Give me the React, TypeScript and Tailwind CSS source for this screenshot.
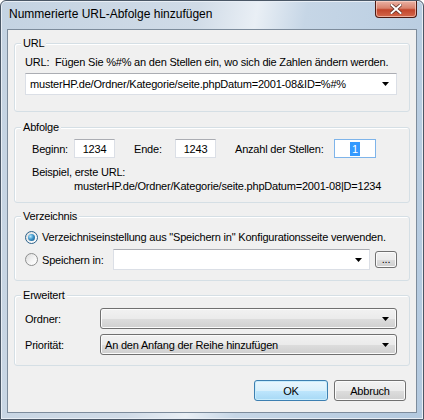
import React from "react";

const font = "font-['Liberation_Sans',Arial,sans-serif]";

function Arrow() {
  return (
    <svg width="7" height="4" viewBox="0 0 7 4" className="shrink-0">
      <path d="M0 0H7L3.5 4Z" fill="#000" />
    </svg>
  );
}

function Group({ title, className, children }: { title: string; className: string; children: React.ReactNode }) {
  return (
    <div className={`relative rounded-[3px] border border-[#d5dfe5] shadow-[inset_1px_1px_0_#ffffff] ${className}`}>
      <span className="absolute left-[6px] top-[-9px] bg-[#f0f0f0] px-[2px] leading-[16px] whitespace-nowrap">{title}</span>
      {children}
    </div>
  );
}

function TextCombo({ className, children }: { className: string; children?: React.ReactNode }) {
  return (
    <div
      className={`flex items-center border border-[#dbdfe6] border-t-[#abadb3] bg-white pl-[4px] pr-[7px] ${className}`}
    >
      <span className="flex-1 whitespace-nowrap leading-[16px]">{children}</span>
      <Arrow />
    </div>
  );
}

function ButtonCombo({ className, children }: { className: string; children?: React.ReactNode }) {
  return (
    <div
      className={`flex items-center rounded-[3px] border border-[#707070] bg-[linear-gradient(to_bottom,#f2f2f2_0%,#ebebeb_50%,#dddddd_51%,#cfcfcf_100%)] pl-[4px] pr-[7px] shadow-[inset_0_0_0_1px_#fbfbfb] ${className}`}
    >
      <span className="flex-1 whitespace-nowrap leading-[16px]">{children}</span>
      <Arrow />
    </div>
  );
}

function NumBox({ value, focused }: { value: string; focused?: boolean }) {
  return (
    <div
      className={`flex h-[19px] shrink-0 items-center justify-center border bg-white ${
        focused ? "border-[#7eb4ea] w-[42px]" : "border-[#dbdfe6] border-t-[#abadb3] w-[41px]"
      }`}
    >
      {focused ? (
        <span className="bg-[#3399ff] px-[2px] leading-[14px] text-white">{value}</span>
      ) : (
        <span className="leading-[16px]">{value}</span>
      )}
    </div>
  );
}

function Radio({ checked }: { checked?: boolean }) {
  return (
    <div
      className={`flex h-[13px] w-[13px] shrink-0 items-center justify-center rounded-full border ${
        checked ? "border-[#2c628b]" : "border-[#8e8f8f]"
      } bg-[linear-gradient(135deg,#dcdcdc_0%,#f6f6f6_60%,#ffffff_100%)]`}
    >
      {checked && (
        <div className="h-[7px] w-[7px] rounded-full bg-[radial-gradient(circle_at_35%_35%,#b4e8ff_0%,#3f95c9_45%,#0d4f80_100%)]" />
      )}
    </div>
  );
}

function Btn({ children, primary, className }: { children: React.ReactNode; primary?: boolean; className: string }) {
  return (
    <div
      className={`flex h-[21px] items-center justify-center rounded-[3px] border ${
        primary
          ? "border-[#3c7fb1] bg-[linear-gradient(to_bottom,#eaf6fd_0%,#d9f0fc_50%,#bee6fd_51%,#a7d9f5_100%)] shadow-[inset_0_0_0_1px_#c8ecfc]"
          : "border-[#707070] bg-[linear-gradient(to_bottom,#f2f2f2_0%,#ebebeb_50%,#dddddd_51%,#cfcfcf_100%)] shadow-[inset_0_0_0_1px_#fbfbfb]"
      } ${className}`}
    >
      <span className="leading-[16px]">{children}</span>
    </div>
  );
}

export default function App() {
  return (
    <div className={`${font} h-[420px] w-[424px] overflow-hidden bg-white text-[11px] tracking-[-0.2px] text-black`}>
      <div className="flex h-full w-full flex-col rounded-t-[6px] border border-[#4a5766] bg-[linear-gradient(100deg,#c4d3e2_0%,#d0dbe7_40%,#e9eff5_52%,#c6d6e6_62%,#b3c9df_100%)] shadow-[inset_0_0_0_1px_#e8eef5]">
        {/* title bar */}
        <div className="flex h-[28px] shrink-0 items-start">
          <span className="ml-[8px] mt-[5px] whitespace-nowrap text-[12px] leading-[16px] tracking-normal text-[#000]">Nummerierte URL-Abfolge hinzufügen</span>
          <div className="ml-auto mr-[6px] flex h-[17px] w-[42px] items-center justify-center rounded-b-[4px] border border-t-0 border-[#4d1a12] bg-[linear-gradient(to_bottom,#eab2a4_0%,#d9826d_45%,#c2452b_55%,#d3684c_100%)] shadow-[inset_0_0_0_1px_rgba(255,220,210,0.6)]">
            <svg width="12" height="10" viewBox="0 0 12 10">
              <path d="M1.5 1L10.5 9M10.5 1L1.5 9" stroke="#5a2a22" strokeWidth="3.4" strokeLinecap="square" />
              <path d="M1.5 1L10.5 9M10.5 1L1.5 9" stroke="#ffffff" strokeWidth="2" strokeLinecap="square" />
            </svg>
          </div>
        </div>

        {/* client area */}
        <div className="mx-[6px] mb-[6px] flex flex-1 flex-col border border-[#7d8c9c] bg-[#f0f0f0] px-[6px]">
          <Group title="URL" className="mt-[13px] h-[69px]">
            <div className="pl-[10px] pt-[10px]">
              <div className="whitespace-nowrap leading-[16px]">URL:&nbsp; Fügen Sie %#% an den Stellen ein, wo sich die Zahlen ändern werden.</div>
              <TextCombo className="mt-[3px] h-[22px] w-[372px]">musterHP.de/Ordner/Kategorie/seite.phpDatum=2001-08&amp;ID=%#%</TextCombo>
            </div>
          </Group>

          <Group title="Abfolge" className="mt-[15px] h-[76px]">
            <div className="pl-[17px] pt-[11px]">
              <div className="flex items-center whitespace-nowrap">
                <span className="w-[42px] shrink-0 leading-[16px]">Beginn:</span>
                <NumBox value="1234" />
                <span className="ml-[19px] w-[41px] shrink-0 leading-[16px]">Ende:</span>
                <NumBox value="1243" />
                <span className="ml-[19px] w-[99px] shrink-0 leading-[16px]">Anzahl der Stellen:</span>
                <NumBox value="1" focused />
              </div>
              <div className="mt-[6px] whitespace-nowrap leading-[16px]">Beispiel, erste URL:</div>
              <div className="-mt-[2px] whitespace-nowrap pl-[42px] leading-[16px]">musterHP.de/Ordner/Kategorie/seite.phpDatum=2001-08|D=1234</div>
            </div>
          </Group>

          <Group title="Verzeichnis" className="mt-[13px] h-[65px]">
            <div className="pl-[10px] pt-[12px]">
              <div className="flex items-center gap-[4px]">
                <Radio checked />
                <span className="whitespace-nowrap leading-[16px]">Verzeichniseinstellung aus "Speichern in" Konfigurationsseite verwenden.</span>
              </div>
              <div className="mt-[4px] flex items-center">
                <Radio />
                <span className="ml-[4px] w-[71px] shrink-0 whitespace-nowrap leading-[16px]">Speichern in:</span>
                <TextCombo className="h-[21px] w-[257px]" />
                <div className="ml-[5px] flex h-[17px] w-[22px] items-center justify-center rounded-[3px] border border-[#707070] bg-[linear-gradient(to_bottom,#f2f2f2_0%,#ebebeb_50%,#dddddd_51%,#cfcfcf_100%)] shadow-[inset_0_0_0_1px_#fbfbfb]">
                  <span className="-mt-[2px] text-[11px] leading-[12px]">...</span>
                </div>
              </div>
            </div>
          </Group>

          <Group title="Erweitert" className="mt-[14px] h-[71px]">
            <div className="pl-[10px] pt-[12px]">
              <div className="flex items-center">
                <span className="w-[75px] shrink-0 leading-[16px]">Ordner:</span>
                <ButtonCombo className="h-[21px] w-[297px]" />
              </div>
              <div className="mt-[5px] flex items-center">
                <span className="w-[75px] shrink-0 leading-[16px]">Priorität:</span>
                <ButtonCombo className="h-[21px] w-[297px]">An den Anfang der Reihe hinzufügen</ButtonCombo>
              </div>
            </div>
          </Group>

          <div className="mt-[14px] flex justify-end gap-[6px] pr-[4px]">
            <Btn primary className="w-[74px]">OK</Btn>
            <Btn className="w-[72px]">Abbruch</Btn>
          </div>
        </div>
      </div>
    </div>
  );
}
